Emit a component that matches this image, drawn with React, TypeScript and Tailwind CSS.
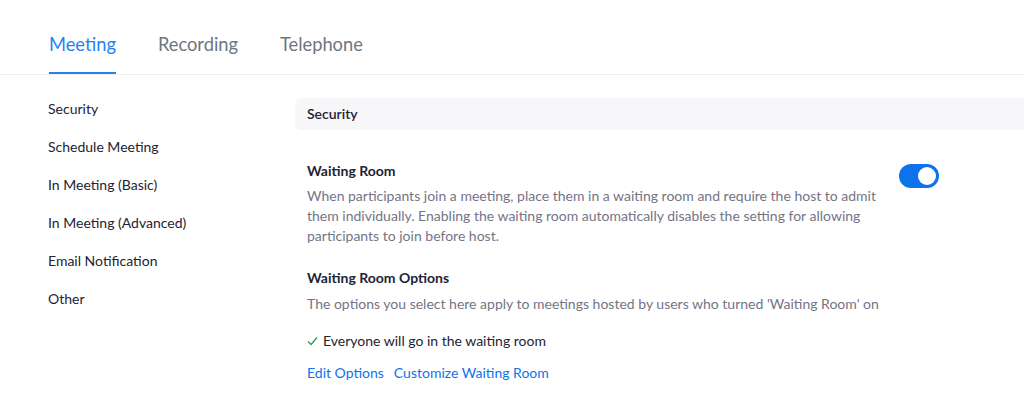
import { useState } from "react";

const sections = [
  "Security",
  "Schedule Meeting",
  "In Meeting (Basic)",
  "In Meeting (Advanced)",
  "Email Notification",
  "Other",
];

const tabs = ["Meeting", "Recording", "Telephone"];

export default function App() {
  const [on, setOn] = useState(true);

  return (
    <div className="h-[403px] w-[1024px] overflow-hidden bg-white font-['Lato','Noto_Sans',sans-serif] text-[#232333]">
      <div className="border-b border-[#f0f0f3] pl-[49px]">
        <ul className="flex gap-[42px] pt-[32px]">
          {tabs.map((tab, i) => (
            <li
              key={tab}
              className={
                i === 0
                  ? "border-b-2 border-[#2681f2] pb-[16px] text-[18.3px] leading-[24px] text-[#2681f2]"
                  : "pb-[18px] text-[18.3px] leading-[24px] text-[#6e7680]"
              }
            >
              {tab}
            </li>
          ))}
        </ul>
      </div>

      <div className="flex">
        <ul className="w-[295px] shrink-0 pl-[48px] pt-[24px]">
          {sections.map((s) => (
            <li key={s} className="h-[38px] text-[14px] leading-[20px]">
              {s}
            </li>
          ))}
        </ul>

        <div className="flex-1 pt-[23px]">
          <div className="rounded-l-[6px] bg-[#f7f7fa] py-[6px] pl-[12px] text-[14px] font-semibold leading-[20px]">
            Security
          </div>

          <div className="flex pl-[12px] pt-[31px]">
            <div className="w-[590px]">
              <h3 className="text-[14px] font-bold leading-[20px]">Waiting Room</h3>
              <p className="mt-[5px] text-[14px] leading-[20px] text-[#747487]">
                When participants join a meeting, place them in a waiting room and require the host to admit
                them individually. Enabling the waiting room automatically disables the setting for allowing
                participants to join before host.
              </p>
            </div>
            <button
              onClick={() => setOn(!on)}
              className={`ml-[2px] mt-[3px] flex h-[24px] w-[40px] items-center rounded-full px-[3px] ${
                on ? "justify-end bg-[#0e72ed]" : "justify-start bg-[#bababa]"
              }`}
            >
              <span className="h-[18px] w-[18px] rounded-full bg-white" />
            </button>
          </div>

          <div className="pl-[12px] pt-[22px]">
            <h3 className="text-[14px] font-bold leading-[20px]">Waiting Room Options</h3>
            <p className="mt-[6px] text-[14px] leading-[20px] text-[#747487]">
              The options you select here apply to meetings hosted by users who turned 'Waiting Room' on
            </p>
            <p className="mt-[17px] flex items-center gap-[5px] text-[14px] leading-[20px]">
              <svg width="11" height="10" viewBox="0 0 11 10" fill="none">
                <path d="M1 5.5 L4 8.5 L10 1.5" stroke="#23a455" strokeWidth="1.3" />
              </svg>
              Everyone will go in the waiting room
            </p>
            <div className="mt-[12px] flex gap-[10px] text-[14px] leading-[20px] text-[#0e72ed]">
              <a>Edit Options</a>
              <a>Customize Waiting Room</a>
            </div>
          </div>
        </div>
      </div>
    </div>
  );
}
